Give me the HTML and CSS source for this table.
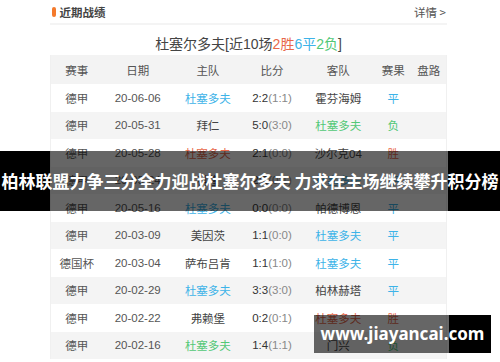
FILE: index.html
```html
<!DOCTYPE html>
<html lang="zh">
<head>
<meta charset="utf-8">
<title>近期战绩</title>
<link rel="stylesheet" href="styles.css">
</head>
<body>
<div class="wrap">
  <div class="head">
    <div class="head-title"><span class="mark"></span>近期战绩</div>
    <div class="more">详情 &gt;</div>
  </div>
  <div class="title">杜塞尔多夫[近10场<span class="win">2胜</span><span class="draw">6平</span><span class="lose">2负</span>]</div>
  <table class="tbl">
    <colgroup>
      <col class="c1"><col class="c2"><col class="c3"><col class="c4"><col class="c5"><col class="c6"><col class="c7">
    </colgroup>
    <thead>
      <tr><th>赛事</th><th>日期</th><th>主队</th><th>比分</th><th>客队</th><th>赛果</th><th>盘路</th></tr>
    </thead>
    <tbody>
      <tr><td>德甲</td><td>20-06-06</td><td class="draw">杜塞多夫</td><td><b>2:2</b><i>(1:1)</i></td><td>霍芬海姆</td><td class="draw">平</td><td></td></tr>
      <tr><td>德甲</td><td>20-05-31</td><td>拜仁</td><td><b>5:0</b><i>(3:0)</i></td><td class="lose">杜塞多夫</td><td class="lose">负</td><td></td></tr>
      <tr><td>德甲</td><td>20-05-28</td><td class="win">杜塞多夫</td><td><b>2:1</b><i>(0:0)</i></td><td>沙尔克04</td><td class="win">胜</td><td></td></tr>
      <tr><td>德甲</td><td>20-05-24</td><td>科隆</td><td><b>2:2</b><i>(0:1)</i></td><td class="draw">杜塞多夫</td><td class="draw">平</td><td></td></tr>
      <tr><td>德甲</td><td>20-05-16</td><td class="draw">杜塞多夫</td><td><b>0:0</b><i>(0:0)</i></td><td>帕德博恩</td><td class="draw">平</td><td></td></tr>
      <tr><td>德甲</td><td>20-03-09</td><td>美因茨</td><td><b>1:1</b><i>(0:0)</i></td><td class="draw">杜塞多夫</td><td class="draw">平</td><td></td></tr>
      <tr><td>德国杯</td><td>20-03-04</td><td>萨布吕肯</td><td><b>1:1</b><i>(1:0)</i></td><td class="draw">杜塞多夫</td><td class="draw">平</td><td></td></tr>
      <tr><td>德甲</td><td>20-02-29</td><td class="draw">杜塞多夫</td><td><b>3:3</b><i>(3:0)</i></td><td>柏林赫塔</td><td class="draw">平</td><td></td></tr>
      <tr><td>德甲</td><td>20-02-22</td><td>弗赖堡</td><td><b>0:2</b><i>(0:1)</i></td><td class="win">杜塞多夫</td><td class="win">胜</td><td></td></tr>
      <tr><td>德甲</td><td>20-02-16</td><td class="lose">杜塞多夫</td><td><b>1:4</b><i>(1:1)</i></td><td>门兴</td><td class="lose">负</td><td></td></tr>
    </tbody>
  </table>
</div>
<div class="banner">柏林联盟力争三分全力迎战杜塞尔多夫 力求在主场继续攀升积分榜</div>
<div class="watermark">www.jiayancai.com</div>
</body>
</html>
```

FILE: styles.css
```css
html, body {
  margin: 0;
  padding: 0;
  background: #fff;
}
body {
  font-family: "Liberation Sans", "Noto Sans CJK SC", sans-serif;
  color: #555;
  width: 500px;
  height: 362px;
  overflow: hidden;
  position: relative;
}
.wrap {
  width: 397px;
  margin-left: 50px;
}
.head {
  height: 23px;
  display: flex;
  align-items: center;
  justify-content: space-between;
  border-bottom: 2px solid #f4f4f4;
}
.head-title {
  display: flex;
  align-items: center;
  font-size: 11.5px;
  font-weight: bold;
  color: #444;
  font-family: "Noto Sans CJK SC", sans-serif;
}
.mark {
  display: inline-block;
  width: 3.5px;
  height: 10px;
  border-radius: 2px;
  background: #f47a2c;
  margin-left: 2px;
  margin-right: 4px;
}
.more {
  font-size: 11.5px;
  color: #555;
  padding-right: 1px;
  font-family: "Noto Sans CJK SC", sans-serif;
}
.title {
  padding-top: 8px;
  height: 22px;
  line-height: 22px;
  text-align: center;
  font-size: 14px;
  color: #444;
}
.win { color: #e8684a; }
.draw { color: #3db3e8; }
.lose { color: #52c876; }
.tbl {
  width: 397px;
  border-collapse: collapse;
  table-layout: fixed;
  font-size: 11.5px;
  border-left: 1px solid #f0f0f0;
  border-right: 1px solid #f0f0f0;
}
.c1 { width: 52px; }
.c2 { width: 70px; }
.c3 { width: 70px; }
.c4 { width: 58px; }
.c5 { width: 74px; }
.c6 { width: 36px; }
.c7 { width: 35px; }
.tbl th {
  height: 29px;
  padding: 0;
  font-weight: normal;
  color: #555;
  background: #f3f3f3;
  text-align: center;
}
.tbl td {
  height: 27.5px;
  padding: 0;
  text-align: center;
  white-space: nowrap;
}
.tbl tbody tr:nth-child(even) td {
  background: #f4f4f4;
}
.tbl td:nth-child(3), .tbl td:nth-child(5) {
  color: #444;
}
.tbl td.win { color: #e8684a; }
.tbl td.draw { color: #3db3e8; }
.tbl td.lose { color: #52c876; }
.tbl b {
  font-weight: normal;
  color: #333;
}
.tbl i {
  font-style: normal;
  color: #888;
}
.banner {
  position: absolute;
  left: 0;
  top: 151px;
  width: 500px;
  height: 60px;
  line-height: 60px;
  background: linear-gradient(to right, #000 0, #000 50px, rgba(0,0,0,0.6) 50px, rgba(0,0,0,0.6) 448px, #000 448px, #000 500px);
  color: #fff;
  font-family: "Noto Sans CJK SC", sans-serif;
  font-weight: bold;
  font-size: 17px;
  text-align: center;
  white-space: nowrap;
}
.watermark {
  position: absolute;
  left: 314px;
  top: 315px;
  width: 177px;
  height: 38px;
  line-height: 38px;
  background: linear-gradient(to right, rgba(0,0,0,0.6) 0, rgba(0,0,0,0.6) 135px, #000 135px, #000 177px);
  color: #fff;
  font-family: "Noto Sans", sans-serif;
  font-weight: bold;
  font-size: 17px;
  text-align: center;
  white-space: nowrap;
}
```
